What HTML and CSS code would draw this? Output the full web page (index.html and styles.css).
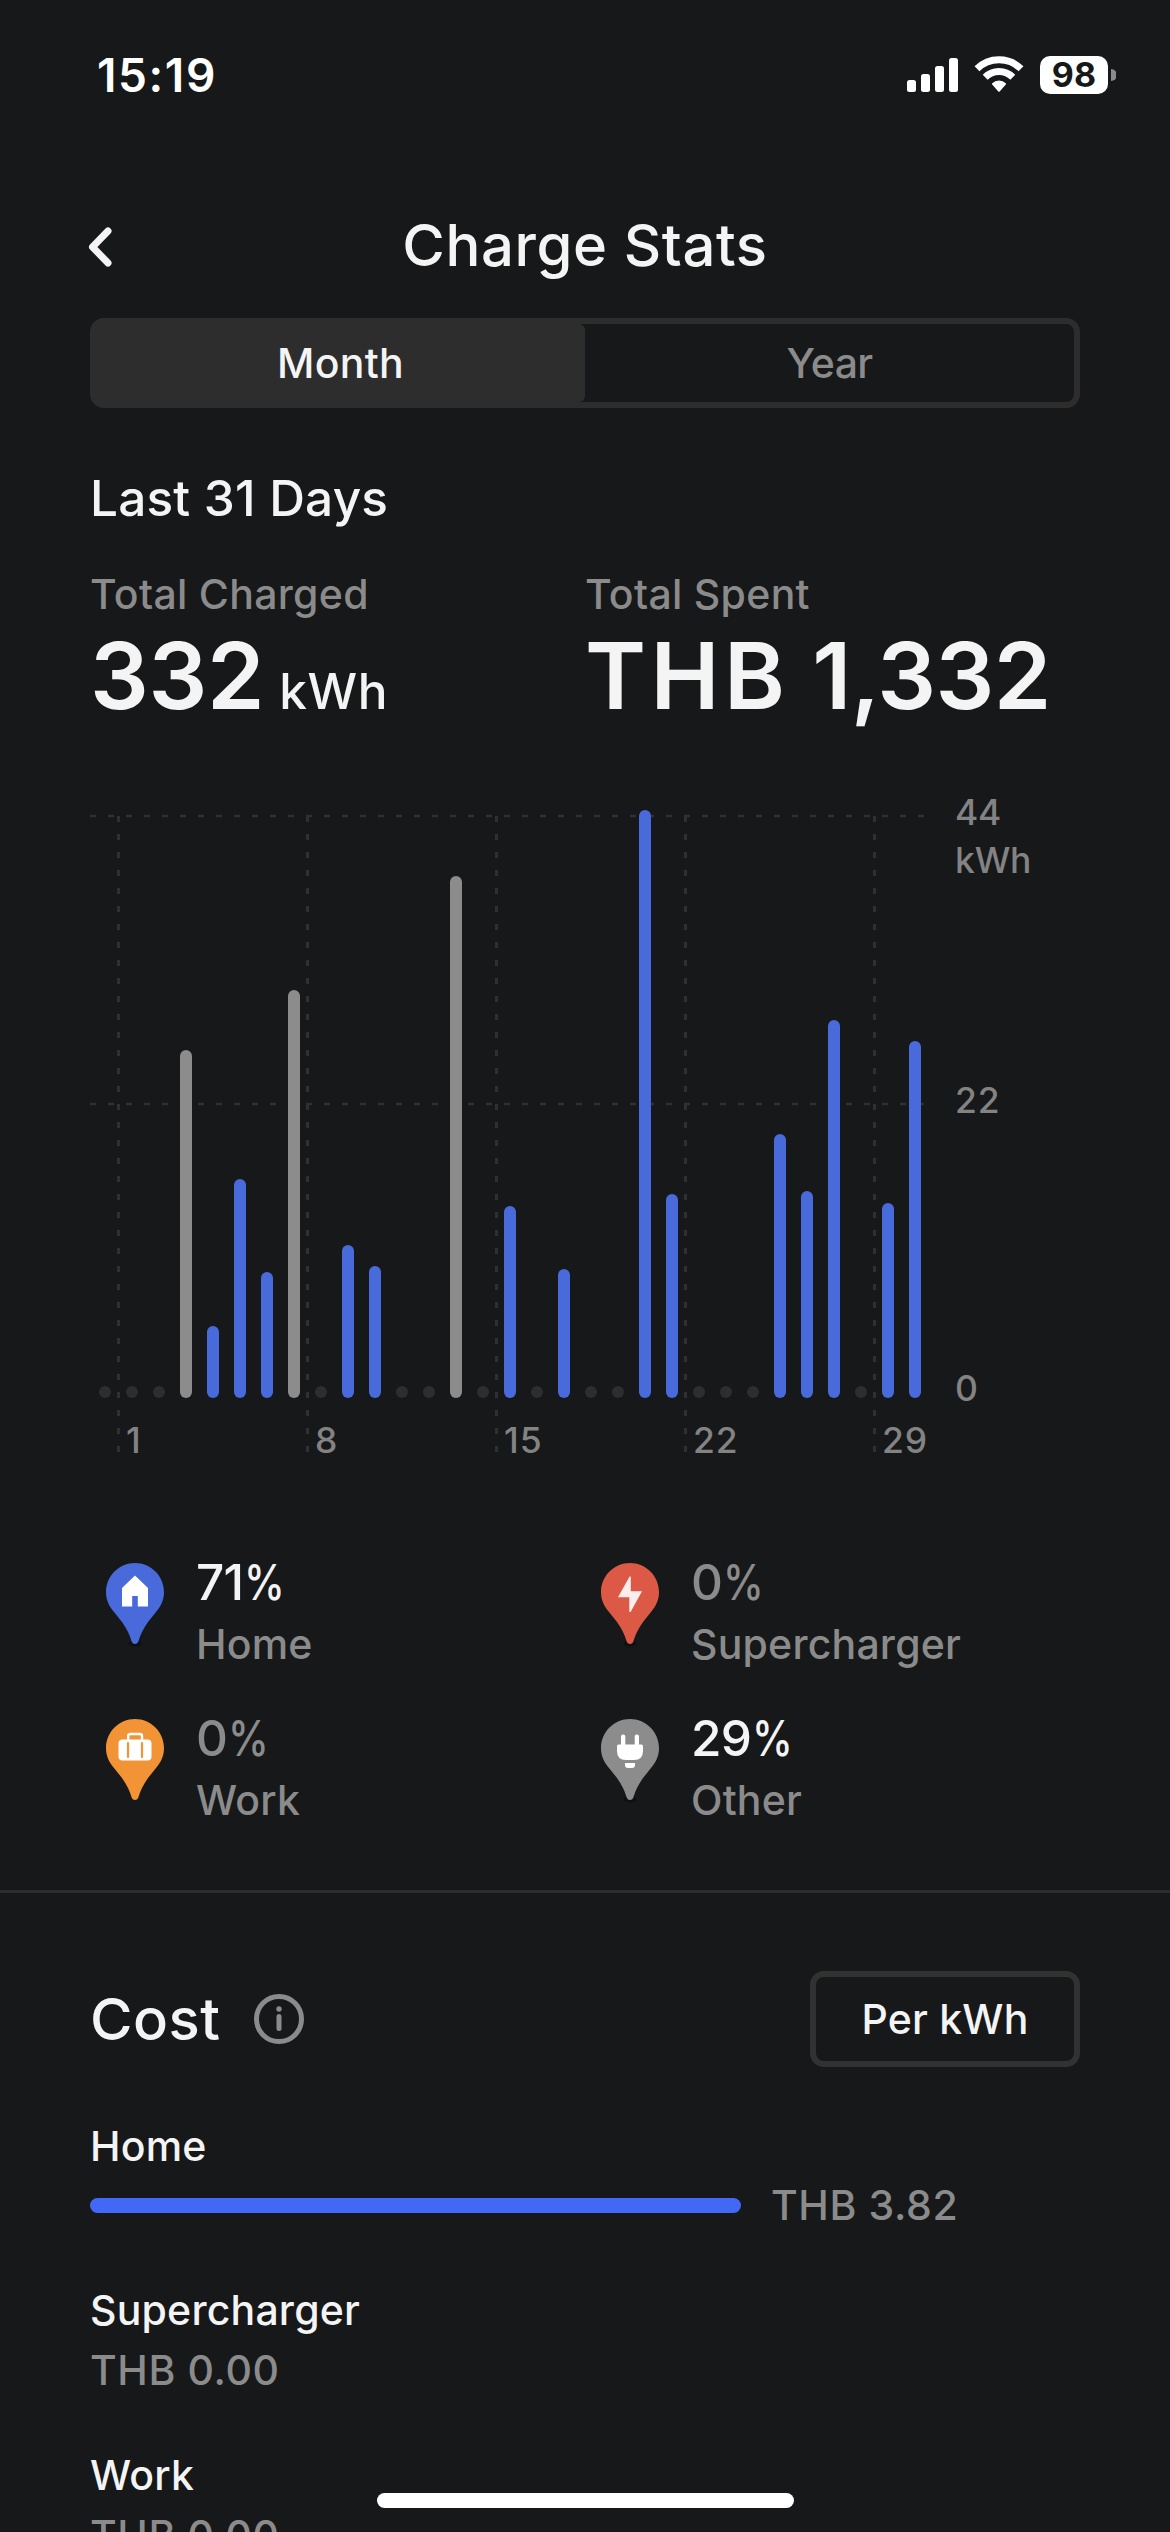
FILE: index.html
```html
<!DOCTYPE html>
<html lang="en">
<head>
<meta charset="utf-8">
<title>Charge Stats</title>
<link rel="stylesheet" href="styles.css">
</head>
<body>
<div class="screen">
  <div class="status">
    <span class="time">15:19</span>
    <div class="status-icons">
      <svg class="signal" width="52" height="36" viewBox="0 0 52 36" fill="#fff"><rect x="0" y="23" width="9" height="12" rx="2.5"/><rect x="14" y="17" width="9" height="18" rx="2.5"/><rect x="28" y="9" width="9" height="26" rx="2.5"/><rect x="42" y="1" width="9" height="34" rx="2.5"/></svg>
      <svg class="wifi" width="50" height="37" viewBox="0 0 50 37" fill="none" stroke="#fff" stroke-width="7"><path d="M3 12.8a31.5 31.5 0 0 1 44 0"/><path d="M11.2 21.3a19.6 19.6 0 0 1 27.6 0"/><path d="M18.2 28.6a1 1 0 0 1 0-1.4a10 10 0 0 1 13.6 0a1 1 0 0 1 0 1.4L25.7 35.5a1 1 0 0 1-1.4 0z" fill="#fff" stroke="none"/></svg>
      <span class="battery">98</span>
      <svg class="nub" width="5" height="12" viewBox="0 0 5 12"><path d="M0 0a6 6 0 0 1 0 12z" fill="#8b8b8c"/></svg>
    </div>
  </div>

  <header class="header">
    <svg class="back" width="26" height="42" viewBox="0 0 26 42" fill="none" stroke="#f4f4f4" stroke-width="7" stroke-linecap="round" stroke-linejoin="round"><path d="M21 5L5.500 21L21 37"/></svg>
    <h1 class="title">Charge Stats</h1>
  </header>

  <main class="content">
    <div class="segmented"><span class="segment active">Month</span><span class="segment year">Year</span></div>

    <h2 class="period">Last 31 Days</h2>
    <div class="totals">
      <div><div class="label">Total Charged</div><div class="amount"><span class="charged">332</span><span class="unit">kWh</span></div></div>
      <div><div class="label">Total Spent</div><div class="amount spent"><span><span class="currency">THB</span> 1,332</span></div></div>
    </div>

    <section class="chart">
      <div class="plot">
        <svg class="gridlines" width="839" height="668" viewBox="0 0 839 668" fill="none" stroke="#2f3033">
          <g stroke-width="2.5" stroke-dasharray="6 12"><path d="M0 28H836"/><path d="M0 316H836"/></g>
          <g stroke-width="3" stroke-dasharray="6 12"><path d="M28.5 28V666"/><path d="M217.5 28V666"/><path d="M406.5 28V666"/><path d="M595.5 28V666"/><path d="M784.5 28V666"/></g>
        </svg>
        <div class="bars">
          <i class="bar"></i><i class="bar"></i><i class="bar"></i>
          <i class="bar other" style="height:348px"></i>
          <i class="bar home" style="height:72px"></i>
          <i class="bar home" style="height:219px"></i>
          <i class="bar home" style="height:126px"></i>
          <i class="bar other" style="height:408px"></i>
          <i class="bar"></i>
          <i class="bar home" style="height:153px"></i>
          <i class="bar home" style="height:132px"></i>
          <i class="bar"></i><i class="bar"></i>
          <i class="bar other" style="height:522px"></i>
          <i class="bar"></i>
          <i class="bar home" style="height:192px"></i>
          <i class="bar"></i>
          <i class="bar home" style="height:129px"></i>
          <i class="bar"></i><i class="bar"></i>
          <i class="bar home" style="height:588px"></i>
          <i class="bar home" style="height:204px"></i>
          <i class="bar"></i><i class="bar"></i><i class="bar"></i>
          <i class="bar home" style="height:264px"></i>
          <i class="bar home" style="height:207px"></i>
          <i class="bar home" style="height:378px"></i>
          <i class="bar"></i>
          <i class="bar home" style="height:195px"></i>
          <i class="bar home" style="height:357px"></i>
        </div>
        <div class="x-axis"><span>1</span><span>8</span><span>15</span><span>22</span><span>29</span></div>
      </div>
      <div class="y-axis"><span class="y-max">44<br>kWh</span><span class="y-mid">22</span><span>0</span></div>
    </section>

    <section class="legend">
      <div class="source on">
        <svg class="pin" width="58" height="84" viewBox="0 0 58 84"><ellipse cx="29" cy="80.5" rx="6.5" ry="3" fill="#0f1011"/><path d="M29 0C45 0 58 13 58 29C58 37 55 43 50 49L42 59Q35 69 32.5 78Q31.700 81 29 81Q26.300 81 25.500 78Q23 69 16 59L8 49C3 43 0 37 0 29C0 13 13 0 29 0Z" fill="#496ada"/><path d="M29 12.500L42 25V43.500H31.800V33H26.200V43.500H16V25Z" fill="#fff"/></svg>
        <div><div class="percent">71<span class="sign">%</span></div><div class="name">Home</div></div>
      </div>
      <div class="source">
        <svg class="pin" width="58" height="84" viewBox="0 0 58 84"><ellipse cx="29" cy="80.5" rx="6.500" ry="3" fill="#0f1011"/><path d="M29 0C45 0 58 13 58 29C58 37 55 43 50 49L42 59Q35 69 32.5 78Q31.700 81 29 81Q26.300 81 25.500 78Q23 69 16 59L8 49C3 43 0 37 0 29C0 13 13 0 29 0Z" fill="#dc5945"/><path d="M29.800 13.500V28.200H41L29.600 49H28.300V34.300H17L28.600 13.500Z" fill="#fbeeec"/></svg>
        <div><div class="percent">0<span class="sign">%</span></div><div class="name">Supercharger</div></div>
      </div>
      <div class="source">
        <svg class="pin" width="58" height="84" viewBox="0 0 58 84"><path d="M29 0C45 0 58 13 58 29C58 37 55 43 50 49L42 59Q35 69 32.500 78Q31.700 81 29 81Q26.300 81 25.500 78Q23 69 16 59L8 49C3 43 0 37 0 29C0 13 13 0 29 0Z" fill="#f29436"/><path d="M22.200 21V17Q22.200 15 24.200 15H34Q36 15 36 17V21" fill="none" stroke="#fff" stroke-width="2.400"/><rect x="12.500" y="20.500" width="33" height="21" rx="4" fill="#fff"/><path d="M22 24V38M36 24V38" stroke="#f29436" stroke-width="2.200" stroke-linecap="round"/></svg>
        <div><div class="percent">0<span class="sign">%</span></div><div class="name">Work</div></div>
      </div>
      <div class="source on">
        <svg class="pin" width="58" height="84" viewBox="0 0 58 84"><ellipse cx="29" cy="80.500" rx="6.500" ry="3" fill="#0f1011"/><path d="M29 0C45 0 58 13 58 29C58 37 55 43 50 49L42 59Q35 69 32.500 78Q31.700 81 29 81Q26.300 81 25.500 78Q23 69 16 59L8 49C3 43 0 37 0 29C0 13 13 0 29 0Z" fill="#8c8c8c"/><g fill="#fff"><rect x="20" y="15.500" width="4.300" height="14" rx="2"/><rect x="33.700" y="15.500" width="4.300" height="14" rx="2"/><path d="M17.500 25.500H40.500Q42 25.500 42 27V32Q42 41 33 41H25Q16 41 16 32V27Q16 25.500 17.500 25.500Z"/><path d="M24 44H34V46Q34 49 31 49H27Q24 49 24 46Z"/></g></svg>
        <div><div class="percent">29<span class="sign">%</span></div><div class="name">Other</div></div>
      </div>
    </section>
  </main>

  <hr class="divider">

  <section class="cost">
    <div class="cost-head">
      <h2 class="cost-title">Cost</h2>
      <svg class="info" width="52" height="52" viewBox="0 0 52 52"><circle cx="26" cy="26" r="22.500" fill="none" stroke="#8b8b8b" stroke-width="5"/><circle cx="26" cy="16" r="2.700" fill="#8b8b8b"/><path d="M26 23.500V35.500" stroke="#8b8b8b" stroke-width="5" stroke-linecap="round"/></svg>
      <button class="per-kwh">Per kWh</button>
    </div>
    <div class="cost-row"><div class="place">Home</div><div class="price has-bar"><span class="cost-bar" style="width:651px"></span>THB 3.82</div></div>
    <div class="cost-row"><div class="place">Supercharger</div><div class="price">THB 0.00</div></div>
    <div class="cost-row"><div class="place">Work</div><div class="price">THB 0.00</div></div>
  </section>
  <div class="home-indicator"></div>
</div>
</body>
</html>
```
FILE: styles.css
```css
* { box-sizing: border-box; }
body { margin: 0; background: #171819; }
h1, h2 { margin: 0; font-weight: 550; }

.screen {
  position: relative;
  width: 1170px;
  height: 2532px;
  overflow: hidden;
  background: #171819;
  color: #f4f4f4;
  font-family: Inter, "Liberation Sans", sans-serif;
  font-weight: 550;
  font-size: 41px;
  letter-spacing: 0.2px;
  white-space: nowrap;
}

.status {
  display: flex;
  align-items: center;
  justify-content: space-between;
  height: 149px;
  padding: 0 55px 0 97px;
  color: #fff;
}
.time { font-size: 46px; font-weight: 600; letter-spacing: 1.6px; }
.status-icons { display: flex; align-items: center; }
.wifi { margin-left: 15px; }
.battery {
  display: flex;
  align-items: center;
  justify-content: center;
  width: 68px;
  height: 38px;
  margin-left: 16px;
  border-radius: 10px;
  background: #fff;
  color: #171819;
  font-size: 34px;
  font-weight: 700;
}
.nub { margin-left: 3px; margin-right: -1px; }

.header {
  display: grid;
  grid-template-columns: 90px 1fr 90px;
  align-items: center;
  height: 91px;
  margin: 50px 0 28px;
}
.back { justify-self: end; margin-right: -23px; margin-top: 4px; }
.title { font-size: 58px; letter-spacing: 0.6px; text-align: center; }

.content { padding: 0 90px; }
.segmented {
  display: grid;
  grid-template-columns: 1fr 1fr;
  height: 90px;
  border: 6px solid #2d2d2d;
  border-radius: 14px;
  background: #171819;
}
.segment { display: flex; align-items: center; justify-content: center; letter-spacing: 0.3px; }
.active { background: #2d2d2d; border-radius: 0 6px 6px 0; }
.year { color: #8b8b8b; letter-spacing: -0.7px; }

.period { margin-top: 60px; font-size: 49.5px; line-height: 60px; }
.totals { display: grid; grid-template-columns: 495px 495px; margin-top: 41px; }
.label { line-height: 50px; color: #8b8b8b; letter-spacing: 0.3px; }
.amount { display: flex; align-items: baseline; margin-top: 6px; font-size: 92.5px; font-weight: 600; line-height: 100px; letter-spacing: -0.4px; }
.unit { margin-left: 15px; font-size: 49.5px; font-weight: 550; line-height: 1; letter-spacing: 0.6px; }
.spent { letter-spacing: -0.6px; }
.currency { letter-spacing: 4.5px; }

.chart {
  display: grid;
  grid-template-columns: 865px 1fr;
  height: 672px;
  margin-top: 63px;
  color: #838383;
  font-size: 35.5px;
}
.plot { position: relative; }
.gridlines { position: absolute; left: 0; top: 0; }
.bars {
  position: relative;
  display: grid;
  grid-template-columns: repeat(31, 27px);
  align-items: end;
  justify-items: center;
  height: 610px;
  padding-left: 1.5px;
}
.bar { width: 12px; height: 12px; border-radius: 6px; background: #2e2e30; }
.home { background: #496ada; }
.other { background: #8c8c8c; }
.x-axis {
  display: grid;
  grid-template-columns: repeat(5, 189px);
  margin-top: 23px;
  padding-left: 36px;
  line-height: 40px;
  letter-spacing: 0.9px;
}
.y-axis { display: flex; flex-direction: column; padding-top: 1px; line-height: 48px; }
.y-max { margin-bottom: 192px; letter-spacing: -0.2px; }
.y-mid { margin-bottom: 240px; letter-spacing: 0.8px; }

.legend { display: grid; grid-template-columns: 495px 495px; row-gap: 31px; margin-top: 91px; }
.source { display: flex; gap: 32px; padding-left: 16px; color: #8b8b8b; }
.pin { margin-top: 12px; overflow: visible; }
.percent { font-size: 49.5px; line-height: 62px; letter-spacing: -0.8px; }
.sign { display: inline-block; margin-left: 1px; transform: scaleX(0.83); transform-origin: left; }
.on .percent { color: #f4f4f4; }
.name { line-height: 63px; }

.divider { height: 3px; margin: 58px 0 0; border: 0; background: #2d2d30; }

.cost { padding: 78px 90px 0; }
.cost-head { display: flex; align-items: center; margin-bottom: 54px; }
.cost-title { font-size: 58px; letter-spacing: 0.5px; }
.info { margin-left: 32px; margin-top: -1px; }
.per-kwh {
  width: 270px;
  height: 96px;
  margin-left: auto;
  padding: 0;
  border: 6px solid #323232;
  border-radius: 14px;
  background: none;
  color: inherit;
  font: inherit;
  letter-spacing: 0.2px;
}
.cost-row { margin-bottom: 55px; line-height: 50px; }
.price { display: flex; align-items: center; margin-top: 10px; color: #8b8b8b; letter-spacing: 0.6px; }
.has-bar { margin-top: 9px; gap: 30px; }
.cost-bar { height: 15px; border-radius: 7.5px; background: #4269f6; }

.home-indicator {
  position: absolute;
  left: 377px;
  top: 2493px;
  width: 417px;
  height: 15px;
  border-radius: 8px;
  background: #fff;
}
```
